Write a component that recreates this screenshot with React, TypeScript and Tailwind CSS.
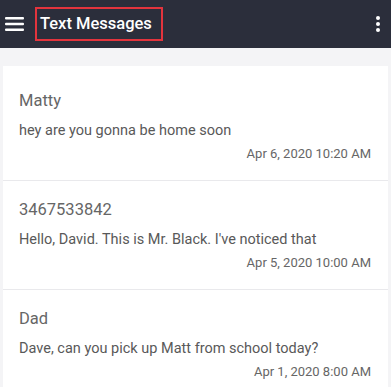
import React from "react";

const msgs = [
  { name: "Matty", text: "hey are you gonna be home soon", date: "Apr 6, 2020 10:20 AM" },
  { name: "3467533842", text: "Hello, David. This is Mr. Black. I've noticed that", date: "Apr 5, 2020 10:00 AM" },
  { name: "Dad", text: "Dave, can you pick up Matt from school today?", date: "Apr 1, 2020 8:00 AM" },
];

export default function App() {
  return (
    <div className="w-[391px] h-[387px] overflow-hidden bg-[#f4f4f6]" style={{ fontFamily: "Roboto, 'Noto Sans', sans-serif" }}>
      <header className="h-[48px] bg-[#2b2e3b] flex items-center pl-[5px] pr-[10px]">
        <svg width="20" height="16" viewBox="0 0 20 16" className="shrink-0">
          <rect x="0" y="1" width="19" height="2.4" rx="1" fill="#fff" />
          <rect x="0" y="6.8" width="19" height="2.4" rx="1" fill="#fff" />
          <rect x="0" y="12.6" width="19" height="2.4" rx="1" fill="#fff" />
        </svg>
        <div className="ml-[10px] h-[34px] w-[128px] border-2 border-[#e3343d] flex items-center pl-[3px]">
          <span className="text-white text-[16.5px] font-medium leading-none">Text Messages</span>
        </div>
        <div className="ml-auto flex flex-col gap-[2px] items-center pr-[1px]">
          <span className="w-[4px] h-[4px] rounded-full bg-white" />
          <span className="w-[4px] h-[4px] rounded-full bg-white" />
          <span className="w-[4px] h-[4px] rounded-full bg-white" />
        </div>
      </header>
      <div className="pt-[18px] px-[3px]">
        <div className="bg-white pt-[6px]">
          {msgs.map((m, i) => (
            <div key={i} className={`pt-[18px] pb-[17px] pl-[16px] pr-[17px] ${i < msgs.length - 1 ? "border-b border-[#e9e9ec]" : ""}`}>
              <div className="text-[16.5px] leading-[22px] text-[#666]">{m.name}</div>
              <div className="mt-[9px] text-[14.5px] leading-[20px] text-[#595959]">{m.text}</div>
              <div className="mt-[4px] text-[13px] leading-[18px] text-[#666] text-right">{m.date}</div>
            </div>
          ))}
        </div>
      </div>
    </div>
  );
}
